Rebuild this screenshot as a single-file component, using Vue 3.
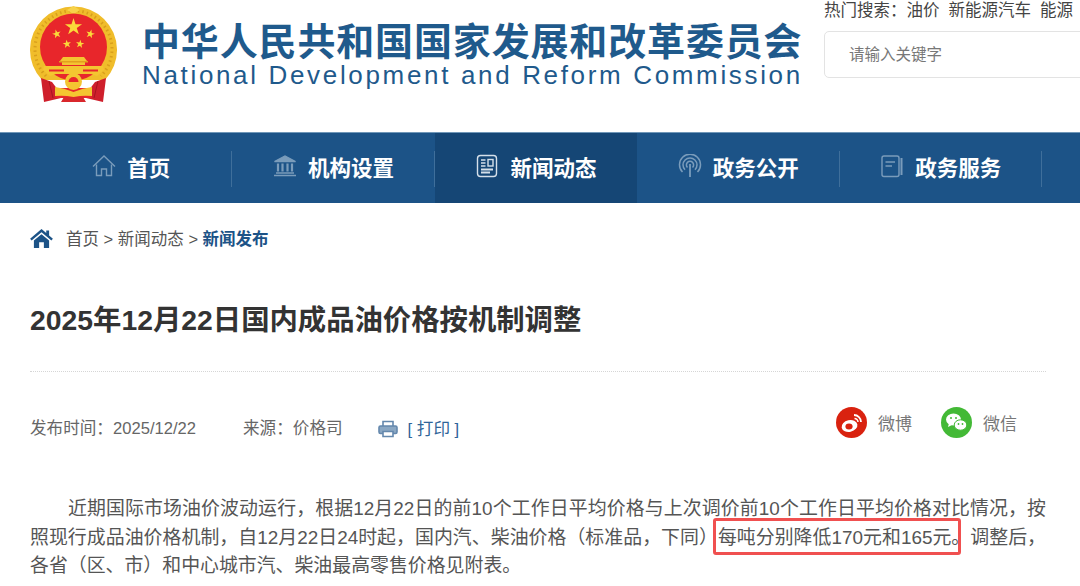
<template>
  <div class="page">
    <header class="header">
      <svg class="emblem" viewBox="0 0 87 96" width="87" height="96">
        <path d="M12 74 A43.5 43.5 0 1 1 75 74 Z" fill="#f0bd2b" />
        <path d="M16 70 A38.5 38.5 0 1 1 71 70" fill="none" stroke="#d99f1c" stroke-width="3" stroke-dasharray="1.5 3" />
        <path d="M37 4 L43.5 0 L50 4 L43.5 8 Z" fill="#f7d24a" />
        <circle cx="43.5" cy="41" r="33.5" fill="#e8262b" />
        <polygon v-for="s in stars" :key="s" :points="s" fill="#fbd93a" />
        <path d="M33 51 h21 l3 4 h-2 v4 h-23 v-4 h-2 Z" fill="#f4c531" />
        <path d="M29 55 h29 v1.5 h-29 Z" fill="#e39f1e" />
        <path d="M14 60 h59 l1 4 l-7 6 l-6 -2 h-35 l-6 2 l-7 -6 Z" fill="#f4c531" />
        <path d="M19 63.5 h15 v2 h-15 Z M53 63.5 h15 v2 h-15 Z" fill="#e8262b" />
        <path d="M11 72 L22 76 L28 84 L31 92 L14 96 Z" fill="#cf1f2c" />
        <path d="M76 72 L65 76 L59 84 L56 92 L73 96 Z" fill="#cf1f2c" />
        <path d="M19 75 L23 92 M68 75 L64 92" stroke="#a8141f" stroke-width="1" />
        <path d="M27 82 h33 l2 10 h-37 Z" fill="#e8262b" />
        <circle cx="43.5" cy="75.5" r="8.5" fill="#f4c531" />
        <path d="M43.5 71 a5 5 0 0 1 5 5 h-10 a5 5 0 0 1 5 -5 Z" fill="#e8262b" />
        <path d="M25 81 Q34 82 43.5 86 Q53 82 62 81 L62 90 Q53 89 43.5 91 Q34 89 25 90 Z" fill="#f4c531" />
        <path d="M31 96 L34 91 H53 L56 96 Z" fill="#d9272c" />
      </svg>
      <div class="brand">
        <div class="brand-cn">中华人民共和国国家发展和改革委员会</div>
        <div class="brand-en">National Development and Reform Commission</div>
      </div>
      <div class="search">
        <div class="hot">
          <span>热门搜索&#xFF1A;</span><span v-for="w in hot" :key="w" class="hot-word">{{ w }}</span>
        </div>
        <div class="search-box">请输入关键字</div>
      </div>
    </header>

    <nav class="nav">
      <a v-for="(item, i) in nav" :key="item.label" class="nav-item" :class="{ active: i === 2 }">
        <svg class="nav-icon" :class="{ bright: i === 2 }" viewBox="0 0 24 24" width="24" height="24" fill="none" stroke="currentColor" stroke-width="1.4">
          <template v-if="i === 0">
            <path d="M1 12.5 L12 2 L23 12.5" />
            <path d="M4.5 10.5 V21.5 H9.5 V15 H14.5 V21.5 H19.5 V10.5" />
          </template>
          <template v-else-if="i === 1">
            <path d="M1.5 7.5 L12 2 L22.5 7.5 Z" fill="currentColor" />
            <path d="M1 21.5 H23 M3 19 H21" />
            <path d="M5 9.5 V17.5 M9.5 9.5 V17.5 M14.5 9.5 V17.5 M19 9.5 V17.5" stroke-width="2.2" />
          </template>
          <template v-else-if="i === 2">
            <rect x="2.5" y="1.5" width="19" height="21" rx="3" />
            <path d="M6 6 H10.5 M6 9 H10.5 M6 12 H10.5" />
            <rect x="13" y="5.5" width="5" height="6.5" />
            <path d="M6 15.5 H18 M6 18.5 H15" stroke-width="1.8" />
          </template>
          <template v-else-if="i === 3">
            <path d="M4.5 18 A10.5 10.5 0 1 1 19.5 18" stroke-width="1.5" />
            <path d="M7 15.8 A7 7 0 1 1 17 15.8" stroke-width="1.5" />
            <path d="M9.5 13.5 A3.6 3.6 0 1 1 14.5 13.5" stroke-width="1.5" />
            <path d="M12 10 V23" stroke-width="1.8" />
          </template>
          <template v-else>
            <rect x="2" y="2" width="17" height="20.5" rx="2" />
            <path d="M21.5 4 V21" stroke-width="2" />
            <path d="M5.5 8 H15 M5.5 12 H12" />
          </template>
        </svg>
        <span class="nav-label">{{ item.label }}</span>
      </a>
    </nav>

    <main class="content">
      <div class="crumbs">
        <svg viewBox="0 0 24 20" width="23" height="19" fill="#1c5387">
          <path d="M12 0 L17 4.2 V1.5 H20 V6.8 L24 10.2 L22.4 12 L12 3.4 L1.6 12 L0 10.2 Z" />
          <path d="M4 12.2 L12 5.6 L20 12.2 V20 H14.5 V14 H9.5 V20 H4 Z" />
        </svg>
        <span class="crumb-text">首页 &gt; 新闻动态 &gt; <b>新闻发布</b></span>
      </div>

      <h1 class="title">2025年12月22日国内成品油价格按机制调整</h1>

      <div class="meta">
        <div class="meta-info">
          <span>发布时间&#xFF1A;2025/12/22</span>
          <span class="source">来源&#xFF1A;价格司</span>
          <svg class="printer" viewBox="0 0 20 18" width="20" height="18" fill="none" stroke="#6488ad" stroke-width="1.6">
            <path d="M5 6 V1.5 H15 V6" />
            <rect x="1" y="6" width="18" height="7.5" rx="1.5" fill="#8aa7c3" />
            <path d="M5 11.5 H15 V16.5 H5 Z" fill="#fff" />
          </svg>
          <span class="print">[ 打印 ]</span>
        </div>
        <div class="share">
          <span class="share-item">
            <svg viewBox="0 0 31 31" width="31" height="31">
              <circle cx="15.5" cy="15.5" r="15.5" fill="#d9220f" />
              <ellipse cx="13.5" cy="19" rx="8" ry="5.8" fill="#fff" transform="rotate(-12 13.5 19)" />
              <ellipse cx="13" cy="19.5" rx="3.6" ry="3" fill="#d9220f" />
              <path d="M18 8 A7 7 0 0 1 25 15" fill="none" stroke="#fff" stroke-width="1.8" />
              <path d="M18.5 11.5 A3.5 3.5 0 0 1 22 15" fill="none" stroke="#fff" stroke-width="1.5" />
            </svg>
            微博
          </span>
          <span class="share-item">
            <svg viewBox="0 0 31 31" width="31" height="31">
              <circle cx="15.5" cy="15.5" r="15.5" fill="#43b936" />
              <ellipse cx="12.5" cy="12.5" rx="7.5" ry="6" fill="#fff" />
              <path d="M8 16 L7 20 L11 18 Z" fill="#fff" />
              <ellipse cx="19.5" cy="18" rx="6.3" ry="5.2" fill="#fff" stroke="#43b936" stroke-width="1" />
              <circle cx="10" cy="11" r="1" fill="#43b936" />
              <circle cx="15" cy="11" r="1" fill="#43b936" />
              <circle cx="17.5" cy="17" r=".9" fill="#43b936" />
              <circle cx="21.5" cy="17" r=".9" fill="#43b936" />
            </svg>
            微信
          </span>
        </div>
      </div>

      <p class="body-text">
        近期国际市场油价波动运行&#xFF0C;根据12月22日的前10个工作日平均价格与上次调价前10个工作日平均价格对比情况&#xFF0C;按照现行成品油价格机制&#xFF0C;自12月22日24时起&#xFF0C;国内汽、柴油价格&#xFF08;标准品&#xFF0C;下同&#xFF09;<span class="mark">每吨分别降低170元和165元。</span>调整后&#xFF0C;各省&#xFF08;区、市&#xFF09;和中心城市汽、柴油最高零售价格见附表。
      </p>
    </main>
  </div>
</template>

<script setup>
const hot = ['油价', '新能源汽车', '能源']
const nav = [
  { label: '首页' },
  { label: '机构设置' },
  { label: '新闻动态' },
  { label: '政务公开' },
  { label: '政务服务' },
]

// 五角星顶点
function star(cx, cy, r, rot = 0) {
  const pts = []
  for (let i = 0; i < 10; i++) {
    const rad = i % 2 ? r * 0.382 : r
    const a = ((-90 + rot + i * 36) * Math.PI) / 180
    pts.push((cx + rad * Math.cos(a)).toFixed(2) + ',' + (cy + rad * Math.sin(a)).toFixed(2))
  }
  return pts.join(' ')
}
const stars = [
  star(43.5, 21, 9),
  star(26.7, 28, 4.6, -15),
  star(60.3, 28, 4.6, 15),
  star(37, 38, 4.4, -8),
  star(50, 38, 4.4, 8),
]
</script>

<style>
html,
body {
  margin: 0;
  height: 100%;
  overflow: hidden;
  background: #fff;
}
</style>

<style scoped>
.page {
  width: 1080px;
  height: 586px;
  overflow: hidden;
  font-family: "Liberation Sans", "Noto Sans CJK SC", sans-serif;
  color: #555;
}

.header {
  display: flex;
  height: 132px;
  padding-left: 30px;
  box-sizing: border-box;
}

.emblem {
  margin-top: 6px;
  flex-shrink: 0;
}

.brand {
  margin-left: 25px;
  width: 657px;
  flex-shrink: 0;
  color: #1f5a8c;
  white-space: nowrap;
}

.brand-cn {
  margin-top: 19px;
  font-size: 38px;
  line-height: 46px;
  letter-spacing: 0.85px;
  font-weight: 700;
}

.brand-en {
  font-size: 26px;
  line-height: 28px;
  letter-spacing: 2.66px;
  margin-top: -4px;
}

.search {
  margin-left: 25px;
  width: 300px;
  flex-shrink: 0;
}

.hot {
  font-size: 16.5px;
  line-height: 20px;
  white-space: nowrap;
  color: #444;
}

.hot-word {
  margin-right: 9px;
}

.search-box {
  margin-top: 11px;
  height: 47px;
  box-sizing: border-box;
  border: 1px solid #e3e3e3;
  border-radius: 5px;
  padding-left: 24px;
  font-size: 15.5px;
  line-height: 45px;
  color: #777;
}

.nav {
  display: flex;
  height: 71px;
  padding-left: 30px;
  background: #1c5387;
  border-top: 1px solid #7097b8;
  box-sizing: border-box;
}

.nav-item {
  position: relative;
  display: flex;
  align-items: center;
  justify-content: center;
  gap: 11px;
  width: 202.4px;
  padding-bottom: 4px;
  box-sizing: border-box;
  flex-shrink: 0;
  font-size: 21.5px;
  font-weight: 700;
  color: #fff;
}

.nav-item::after {
  content: "";
  position: absolute;
  right: 0;
  top: 18px;
  height: 36px;
  width: 1px;
  background: #3f6f9b;
}

.nav-item.active {
  background: #154675;
}

.nav-item.active::after {
  display: none;
}

.nav-icon {
  flex-shrink: 0;
  color: #7a9cbb;
}

.nav-icon.bright {
  color: #d5e0ea;
}

.content {
  padding: 0 34px 0 30px;
}

.crumbs {
  display: flex;
  align-items: center;
  gap: 13px;
  margin-top: 25px;
  height: 20px;
}

.crumb-text {
  font-size: 16.5px;
}

.crumb-text b {
  color: #1c5387;
}

.title {
  margin: 53px 0 0;
  padding-bottom: 31px;
  border-bottom: 1px dotted #d6d6d6;
  font-size: 28.35px;
  line-height: 39px;
  color: #333;
}

.meta {
  display: flex;
  align-items: center;
  height: 31px;
  margin-top: 35px;
  font-size: 16.6px;
  color: #666;
}

.meta-info {
  display: flex;
  align-items: center;
  padding-top: 8px;
}

.source {
  margin-left: 47px;
}

.printer {
  margin-left: 35px;
  margin-top: 4px;
}

.print {
  margin-left: 10px;
  color: #2f6499;
  margin-top: 2px;
}

.share {
  display: flex;
  gap: 29px;
  margin-left: auto;
  margin-right: 29px;
}

.share-item {
  display: flex;
  align-items: center;
  gap: 11px;
  font-size: 17px;
  color: #777;
}

.body-text {
  margin: 57px 0 0;
  font-size: 18.9px;
  line-height: 28.5px;
  text-indent: 38px;
  text-align: justify;
  color: #555;
}

.mark {
  position: relative;
}

.mark::after {
  content: "";
  position: absolute;
  left: -5px;
  right: 9px;
  top: -9px;
  bottom: -7px;
  border: 3px solid #f05050;
  border-radius: 3px;
}
</style>
